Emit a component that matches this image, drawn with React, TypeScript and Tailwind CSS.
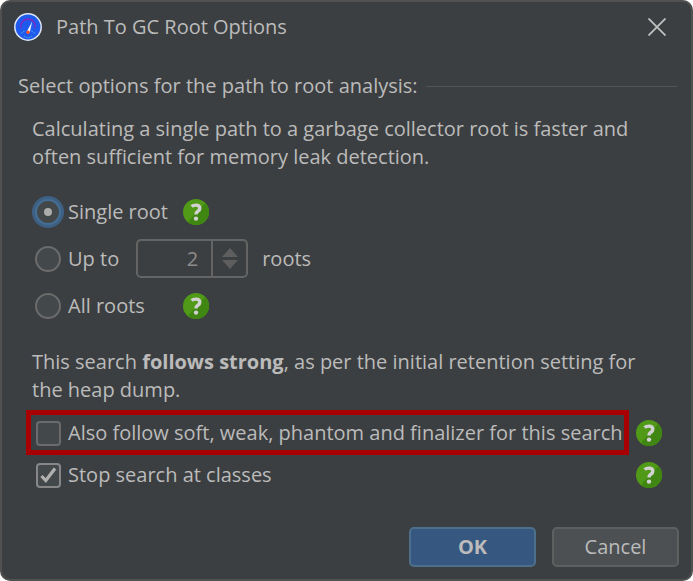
import React, { useId, useState } from 'react';

type RootMode = 'single' | 'upTo' | 'all';

function AppIcon() {
  return (
    <svg className="size-7 shrink-0" viewBox="0 0 28 28" aria-hidden="true">
      <circle cx="14" cy="14" r="13.2" fill="#1f5aec" stroke="#dce6f5" strokeWidth="1.5" />
      <path d="M7 15A7.2 7.2 0 1 1 21 15" fill="none" stroke="#7a2cc4" strokeWidth="1.6" />
      <path d="M7.5 20.5a8 8 0 0 1 3-2.6M17.5 17.9a8 8 0 0 1 3 2.6M10 23a6 6 0 0 0 8 0" fill="none" stroke="#3fa0f0" strokeWidth="1.2" strokeDasharray="1.5 1" />
      <path d="M18.2 8.4l-2.4 11-3-1z" fill="#f1f4fb" />
      <circle cx="14" cy="19.3" r="1.8" fill="#f4502c" />
    </svg>
  );
}

function HelpButton({ label }: { label: string }) {
  const clip = useId();
  return (
    <button type="button" aria-label={label} className="size-[26px] shrink-0 rounded-full">
      <svg viewBox="0 0 26 26" className="block size-full" aria-hidden="true">
        <clipPath id={clip}>
          <circle cx="13" cy="13" r="13" />
        </clipPath>
        <g clipPath={`url(#${clip})`}>
          <rect width="26" height="26" fill="#519a18" />
          <path d="M26 0v26H2z" fill="#3f8612" />
        </g>
        <path
          d="M8.6 7.6c1.1-1 2.6-1.5 4.2-1.5 2.5 0 4 1.2 4 3.1 0 1.5-.8 2.3-1.9 3-1.3.9-1.9 1.5-1.9 3.3"
          fill="none"
          stroke="#d2d2d2"
          strokeWidth="3.4"
        />
        <circle cx="13" cy="19.6" r="2.2" fill="#d2d2d2" />
      </svg>
    </button>
  );
}

interface RadioProps {
  label: string;
  checked: boolean;
  onSelect: () => void;
}

function Radio({ label, checked, onSelect }: RadioProps) {
  return (
    <label className="flex items-center gap-[7px]">
      <span className="grid size-[26px] shrink-0 place-items-center">
        <input
          type="radio"
          name="rootMode"
          checked={checked}
          onChange={onSelect}
          className="peer col-start-1 row-start-1 size-[26px] appearance-none rounded-full border-2 border-[#6b6b6b] bg-[#43494a] outline-none checked:border-[#466d94] checked:ring-3 checked:ring-[#3d6185]"
        />
        <span className="pointer-events-none col-start-1 row-start-1 hidden size-2 rounded-full bg-[#adadad] peer-checked:block" />
      </span>
      {label}
    </label>
  );
}

interface CheckboxProps {
  label: string;
  checked: boolean;
  onChange: (checked: boolean) => void;
}

function Checkbox({ label, checked, onChange }: CheckboxProps) {
  return (
    <label className="flex items-center gap-[7px] whitespace-nowrap">
      <span className="grid size-[25px] shrink-0 place-items-center">
        <input
          type="checkbox"
          checked={checked}
          onChange={(e) => onChange(e.target.checked)}
          className="peer col-start-1 row-start-1 size-[25px] appearance-none rounded-[4px] border-2 border-[#6b6b6b] bg-[#43494a] outline-none checked:border-[#878787]"
        />
        <svg
          viewBox="0 0 25 25"
          className="pointer-events-none col-start-1 row-start-1 hidden size-[25px] peer-checked:block"
          aria-hidden="true"
        >
          <path d="M5.5 13l4.3 4.5 9.2-12" fill="none" stroke="#b0b0b0" strokeWidth="3.2" />
        </svg>
      </span>
      {label}
    </label>
  );
}

export default function App() {
  const [mode, setMode] = useState<RootMode>('single');
  const [count, setCount] = useState(2);
  const [followWeak, setFollowWeak] = useState(false);
  const [stopAtClasses, setStopAtClasses] = useState(true);
  const countDisabled = mode !== 'upTo';

  return (
    <div className="bg-white font-['Open_Sans','Noto_Sans',sans-serif] text-[20px] leading-7 text-[#bbbbbb]">
      <div
        role="dialog"
        aria-labelledby="dialog-title"
        className="rounded-[10px] border-2 border-[#515151] bg-[#3c3f41] pb-3"
      >
        <header className="flex h-[50px] items-center pr-[22px] pl-3">
          <AppIcon />
          <h1 id="dialog-title" className="ml-[14px] flex-1">Path To GC Root Options</h1>
          <button type="button" aria-label="Close" className="grid size-6 place-items-center">
            <svg viewBox="0 0 18 18" className="size-[18px]" aria-hidden="true">
              <path d="M0.5 0.5l17 17M17.5 0.5l-17 17" stroke="#c0c0c0" strokeWidth="1.8" />
            </svg>
          </button>
        </header>

        <div className="mt-5 flex items-center gap-2 pr-[14px] pl-4">
          <h2 className="shrink-0">Select options for the path to root analysis:</h2>
          <hr className="flex-1 border-[#555555]" />
        </div>

        <main className="pr-7 pl-[30px]">
          <p className="mt-[15px]">
            Calculating a single path to a garbage collector root is faster and often sufficient for memory leak
            detection.
          </p>

          {/* Number of roots to search for */}
          <div className="mt-[27px] flex items-center gap-[15px] pl-[3px]">
            <Radio label="Single root" checked={mode === 'single'} onSelect={() => setMode('single')} />
            <HelpButton label="Help for single root" />
          </div>

          <div className="mt-[13px] flex items-center pl-[3px]">
            <Radio label="Up to" checked={mode === 'upTo'} onSelect={() => setMode('upTo')} />
            <div className="mr-[14px] ml-[17px] flex h-[39px] w-28 rounded-[5px] border-2 border-[#646464]">
              <input
                type="text"
                aria-label="Maximum number of roots"
                value={count}
                disabled={countDisabled}
                onChange={(e) => setCount(Number(e.target.value) || 1)}
                className="min-w-0 flex-1 bg-transparent pr-[13px] text-right text-[#8c8c8c]"
              />
              <div className="flex w-[35px] flex-col items-center justify-center gap-[3px] border-l-2 border-[#646464]">
                <button type="button" aria-label="Increase" disabled={countDisabled} onClick={() => setCount(count + 1)}>
                  <svg viewBox="0 0 16 9" className="block h-[9px] w-4" aria-hidden="true">
                    <path d="M8 0l8 9H0z" fill="#5e5e5e" />
                  </svg>
                </button>
                <button
                  type="button"
                  aria-label="Decrease"
                  disabled={countDisabled}
                  onClick={() => setCount(Math.max(1, count - 1))}
                >
                  <svg viewBox="0 0 16 9" className="block h-[9px] w-4" aria-hidden="true">
                    <path d="M0 0h16L8 9z" fill="#5e5e5e" />
                  </svg>
                </button>
              </div>
            </div>
            <span>roots</span>
          </div>

          <div className="mt-[14px] flex items-center gap-[38px] pl-[3px]">
            <Radio label="All roots" checked={mode === 'all'} onSelect={() => setMode('all')} />
            <HelpButton label="Help for all roots" />
          </div>

          <p className="mt-7">
            This search <strong className="font-bold">follows strong</strong>, as per the initial retention setting for
            the heap dump.
          </p>
        </main>

        <div className="mt-[6px] flex items-center justify-between pr-[29px] pl-6">
          <div className="border-[5px] border-[#a80000] pt-1 pr-px pb-[3px] pl-[5px]">
            <Checkbox
              label="Also follow soft, weak, phantom and finalizer for this search"
              checked={followWeak}
              onChange={setFollowWeak}
            />
          </div>
          <HelpButton label="Help for reference types" />
        </div>

        <div className="mt-[6px] flex items-center justify-between pr-[29px] pl-[34px]">
          <Checkbox label="Stop search at classes" checked={stopAtClasses} onChange={setStopAtClasses} />
          <HelpButton label="Help for stopping at classes" />
        </div>

        <footer className="mt-[38px] flex justify-end gap-4 pr-3">
          <button
            type="button"
            className="h-10 w-[127px] rounded-[5px] border-2 border-[#4c708c] bg-[#365880] font-bold"
          >
            OK
          </button>
          <button
            type="button"
            className="h-10 w-[127px] rounded-[5px] border-2 border-[#5e6060] bg-[#4c5052]"
          >
            Cancel
          </button>
        </footer>
      </div>
    </div>
  );
}
